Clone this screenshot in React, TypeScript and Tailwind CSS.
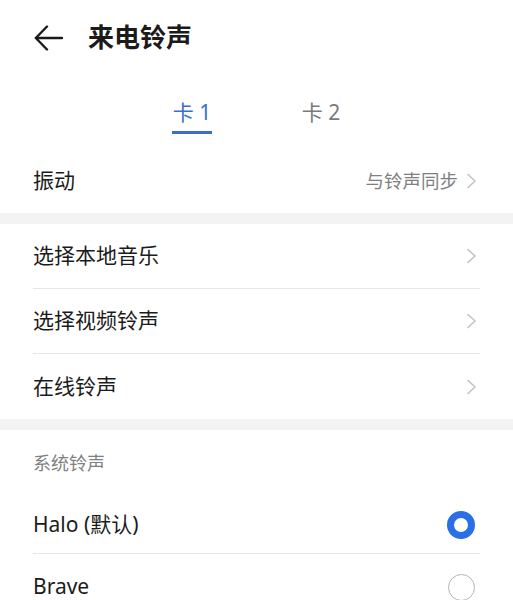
import React from "react";

const Chevron = () => (
  <svg width="11" height="16" viewBox="0 0 11 16" fill="none" className="shrink-0">
    <path d="M2 1.5 L9 8 L2 14.5" stroke="#c2c2c2" strokeWidth="1.6" strokeLinecap="round" strokeLinejoin="round" />
  </svg>
);

const Row = ({ label, right, divider }: { label: string; right?: string; divider?: boolean }) => (
  <div className="px-[33px]">
    <div className={`flex h-[65px] items-center justify-between ${divider ? "border-b border-[#e6e6e6]" : ""}`}>
      <span className="text-[21px] text-[#1b1b1b]">{label}</span>
      <div className="flex items-center gap-[8px] pr-[3px]">
        {right && <span className="text-[18.5px] text-[#7f7f7f]">{right}</span>}
        <Chevron />
      </div>
    </div>
  </div>
);

export default function App() {
  return (
    <div
      className="w-[513px] h-[600px] overflow-hidden bg-white"
      style={{ fontFamily: '"Noto Sans", "Noto Sans CJK SC", sans-serif' }}
    >
      {/* Header */}
      <div className="flex h-[75px] items-center px-[34px]">
        <svg width="30" height="26" viewBox="0 0 30 26" fill="none">
          <path d="M13 1.5 L1.8 13 L13 24.5 M1.8 13 H28" stroke="#1b1b1b" strokeWidth="2.4" strokeLinecap="round" strokeLinejoin="round" />
        </svg>
        <span className="ml-[24px] text-[26px] font-semibold text-[#1b1b1b]">来电铃声</span>
      </div>

      {/* Tabs */}
      <div className="flex h-[73px] justify-center">
        <div className="flex w-[129px] flex-col items-center pt-[22px]">
          <span className="text-[21px] leading-[30px] text-[#3b6fc6]">卡 1</span>
          <div className="mt-[4px] h-[3px] w-[40px] bg-[#3b6fc6]" />
        </div>
        <div className="flex w-[129px] flex-col items-center pt-[22px]">
          <span className="text-[21px] leading-[30px] text-[#7a7a7a]">卡 2</span>
        </div>
      </div>

      <Row label="振动" right="与铃声同步" />

      <div className="h-[11px] bg-[#f3f3f3]" />

      <Row label="选择本地音乐" divider />
      <Row label="选择视频铃声" divider />
      <Row label="在线铃声" />

      <div className="h-[11px] bg-[#f3f3f3]" />

      <div className="px-[33px]">
        <div className="flex h-[66px] items-center">
          <span className="text-[18px] text-[#7f7f7f]">系统铃声</span>
        </div>
        <div className="flex h-[58px] items-center justify-between border-b border-[#e6e6e6]">
          <span className="text-[21px] text-[#1b1b1b]">Halo (默认)</span>
          <div className="mr-[5px] h-[28px] w-[28px] rounded-full border-[7px] border-[#2a6fe6]" />
        </div>
        <div className="flex h-[66px] items-center justify-between">
          <span className="text-[21px] text-[#1b1b1b]">Brave</span>
          <div className="mr-[5px] h-[27px] w-[27px] rounded-full border-[1.5px] border-[#b3b3b3]" />
        </div>
      </div>
    </div>
  );
}
